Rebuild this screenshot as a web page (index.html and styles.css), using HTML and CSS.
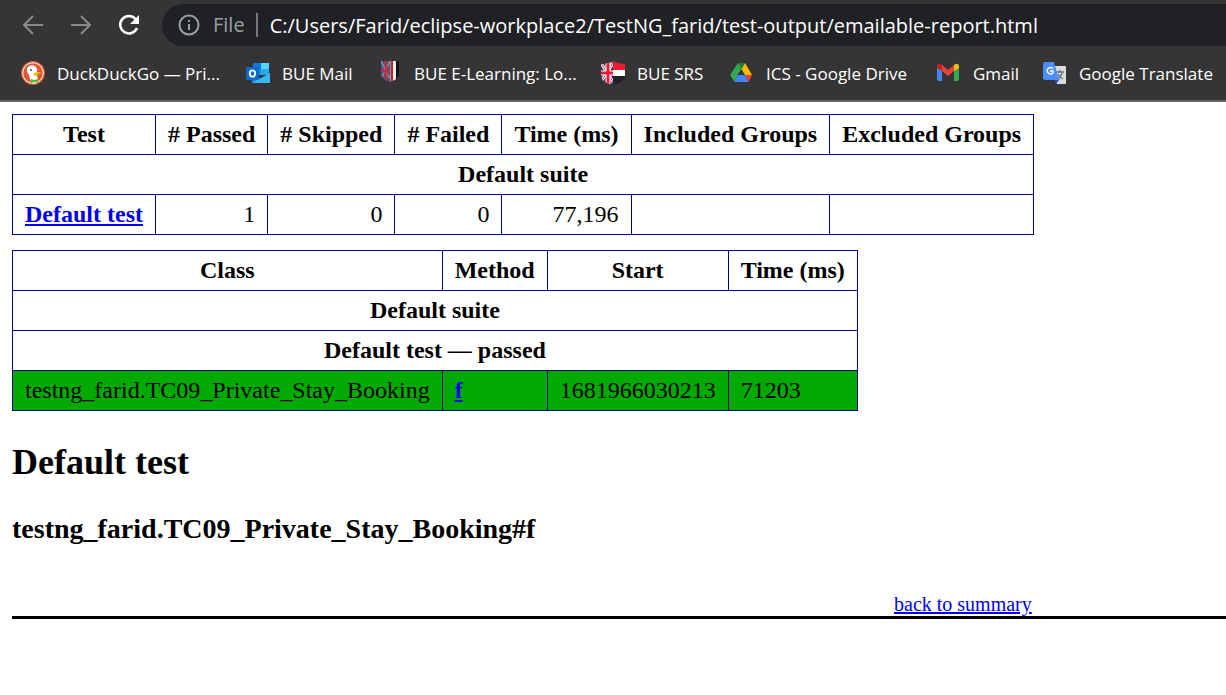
FILE: index.html
```html
<!DOCTYPE html>
<html lang="en">
<head>
<meta charset="utf-8">
<title>TestNG Report</title>
<link rel="stylesheet" href="styles.css">
</head>
<body>
<header class="browser">
  <div class="toolbar">
    <button class="nav" aria-label="Back"><svg viewBox="0 0 24 24"><path d="M22 12H3M12 3l-9 9 9 9"/></svg></button>
    <button class="nav" aria-label="Forward"><svg viewBox="0 0 24 24"><path d="M2 12h19M12 3l9 9-9 9"/></svg></button>
    <button class="nav reload" aria-label="Reload"><svg viewBox="0 0 24 24"><path d="M20 15A8.700 8.700 0 1 1 18.500 6"/><path class="head" d="M22 2v9h-9z"/></svg></button>
    <div class="omnibox">
      <svg class="info" viewBox="0 0 24 24"><circle cx="12" cy="12" r="9.500"/><path d="M12 11v6M12 7v2"/></svg>
      <label class="scheme" for="url">File</label>
      <input class="url" id="url" type="text" value="C:/Users/Farid/eclipse-workplace2/TestNG_farid/test-output/emailable-report.html">
    </div>
  </div>
  <nav class="bookmarks">
    <a class="bookmark" href="#"><svg viewBox="0 0 24 24"><circle cx="12" cy="12" r="12" fill="#de5833"/><circle cx="12" cy="12" r="10.300" fill="none" stroke="#fff" stroke-width="1"/><path d="M7 6c2-3 9-2 9 3v5l1 7c-3 2-6 1-7 0L8 14C6 11 5 8 7 6z" fill="#fff"/><path d="M13 12c2-1 4-1 7-1-1 2-4 2-4 3h2l-3 1c-2 0-3-1-2-3z" fill="#fdb913"/><path d="M10 18l3 1 4-1v4l-3-1-4 1z" fill="#4cba3c"/><circle cx="10" cy="9" r="1" fill="#2d4f8e"/></svg><span>DuckDuckGo — Pri...</span></a>
    <a class="bookmark" href="#"><svg viewBox="0 0 24 24"><path d="M7 2h16v12H7z" fill="#1490df"/><path d="M15 2h8v6h-8z" fill="#50d9ff"/><path d="M7 2h8v6H7z" fill="#0f78d4"/><path d="M15 8h8v6h-8z" fill="#28a8ea"/><path d="M6 13l9 5 9-6v10H6z" fill="#1687d9"/><path d="M6 22l18-10v10z" fill="#35b8f1"/><rect y="6" width="13" height="13" rx="1" fill="#0a6cc8"/><ellipse cx="6.500" cy="12.500" rx="2.700" ry="3.200" fill="none" stroke="#fff" stroke-width="1.800"/></svg><span>BUE Mail</span></a>
    <a class="bookmark" href="#"><svg viewBox="0 0 24 24"><clipPath id="crest"><path d="M3 0h18v14q-2 5-9 7-7-2-9-7z"/></clipPath><g clip-path="url(#crest)"><path d="M3 0h9v22H3z" fill="#355b8b"/><path d="M3 0l9 18M12 0L3 18" stroke="#9b8793" stroke-width="1.500"/><path d="M3 10h9M8 0v22" stroke="#c42e3a" stroke-width="2.500"/><path d="M12 0h1v22h-1z" fill="#8f949a"/><path d="M13 0h2v22h-2z" fill="#c91d29"/><path d="M15 0h3v22h-3z" fill="#f0eeee"/><path d="M18 0h3v22h-3z" fill="#111"/></g></svg><span>BUE E-Learning: Lo...</span></a>
    <a class="bookmark" href="#"><svg viewBox="0 0 24 24"><clipPath id="shield"><path d="M0 3q7 0 12-3 5 3 12 3v13q-2 6-12 8Q2 22 0 16z"/></clipPath><g clip-path="url(#shield)"><path d="M0 0h12v24H0z" fill="#283b83"/><path d="M0 2l12 19M12 2L0 21" stroke="#fff" stroke-width="3"/><path d="M0 2l12 19M12 2L0 21" stroke="#e82536"/><path d="M0 12h12M7 0v24" stroke="#fff" stroke-width="5"/><path d="M0 12h12M7 0v24" stroke="#ed1c2e" stroke-width="3"/><path d="M12 0h12v9H12z" fill="#ed1c2e"/><path d="M12 9h12v6H12z" fill="#fff"/><path d="M12 15h12v9H12z" fill="#202124"/></g></svg><span>BUE SRS</span></a>
    <a class="bookmark" href="#"><svg viewBox="0 0 24 24"><path d="M8 2h7l-3.500 6z" fill="#188038"/><path d="M15 2l7 12h-7L11.500 8z" fill="#fbbc04"/><path d="M15 14h7l-3.500 7z" fill="#ea4335"/><path d="M0 14L8 2l3.500 6-4 6-3 7z" fill="#34a853"/><path d="M7.500 14h7.500l3.500 7h-14z" fill="#4285f4"/></svg><span>ICS - Google Drive</span></a>
    <a class="bookmark" href="#"><svg viewBox="0 0 24 24"><path d="M0 6l5 4v10H2q-2 0-2-2z" fill="#4285f4"/><path d="M17 10l5-4v12q0 2-2 2h-3z" fill="#34a853"/><path d="M5 4l6 5 6-5v6l-6 5-6-5z" fill="#ea4335"/><path d="M0 6V5q1-4 5-1v6L0 7z" fill="#c5221f"/><path d="M17 4q4-3 5 1v2l-5 3z" fill="#fbbc04"/></svg><span>Gmail</span></a>
    <a class="bookmark" href="#"><svg viewBox="0 0 24 24"><path d="M10 5h12q1 0 1 1v16q0 1-1 1h-8z" fill="#d9dcdf"/><path d="M13 11h8M17 9v2M19 12q-1 4-5 6M15 13q1 3 5 5" stroke="#63767e" stroke-width="1.300" fill="none"/><path d="M11 18h6l-4 5z" fill="#3a4fc4"/><path d="M2 1h9l5 18H2q-2 0-2-2V3q0-2 2-2z" fill="#4c8df6"/><path d="M10 7.500A3.300 3.300 0 1 0 10 12V10H7" stroke="#fff" stroke-width="1.400" fill="none"/></svg><span>Google Translate</span></a>
  </nav>
</header>
<main class="report">
  <table class="results" id="summary">
    <tr><th>Test</th><th># Passed</th><th># Skipped</th><th># Failed</th><th>Time (ms)</th><th>Included Groups</th><th>Excluded Groups</th></tr>
    <tr><th colspan="7">Default suite</th></tr>
    <tr><td><a class="strong" href="#t0">Default test</a></td><td class="num">1</td><td class="num">0</td><td class="num">0</td><td class="num">77,196</td><td></td><td></td></tr>
  </table>
  <table class="results">
    <tr><th>Class</th><th>Method</th><th>Start</th><th>Time (ms)</th></tr>
    <tr><th colspan="4">Default suite</th></tr>
    <tr><th colspan="4">Default test — passed</th></tr>
    <tr class="passed"><td>testng_farid.TC09_Private_Stay_Booking</td><td><a class="strong" href="#m0">f</a></td><td>1681966030213</td><td>71203</td></tr>
  </table>
  <h2 class="test-title" id="t0">Default test</h2>
  <h3 class="method-title" id="m0">testng_farid.TC09_Private_Stay_Booking#f</h3>
  <p class="totop"><a href="#summary">back to summary</a></p>
</main>
</body>
</html>
```

FILE: styles.css
```css
body {
  margin: 0;
  background: #fff;
  color: #000;
  font-family: "Liberation Serif", "Times New Roman", serif;
  font-size: 24px;
  overflow-x: hidden;
}

.browser {
  background: #353535;
  border-bottom: 2px solid #636363;
  font-family: "Open Sans", "Noto Sans", sans-serif;
}

.toolbar {
  display: flex;
  align-items: center;
  gap: 24px;
  padding: 4px 0 0 21px;
}

.nav {
  width: 24px;
  height: 24px;
  padding: 0;
  border: 0;
  background: none;
  color: #8a8a8a;
}

.nav svg {
  display: block;
  fill: none;
  stroke: currentColor;
  stroke-width: 2;
}

.reload {
  color: #fff;
}

.reload svg {
  stroke-width: 2.5;
}

.reload .head {
  fill: currentColor;
  stroke: none;
}

.omnibox {
  flex: 1;
  display: flex;
  align-items: center;
  height: 42px;
  margin-left: -3px;
  padding-left: 15px;
  border-radius: 21px 0 0 21px;
  background: #202124;
}

.info {
  width: 24px;
  fill: none;
  stroke: #9aa0a6;
  stroke-width: 2;
}

.scheme {
  margin-left: 12px;
  padding-right: 11px;
  border-right: 2px solid #77797c;
  color: #9aa0a6;
  font-size: 20px;
  line-height: 24px;
}

.url {
  flex: 1;
  min-width: 0;
  padding: 0 0 0 12px;
  border: 0;
  outline: 0;
  background: none;
  color: #fff;
  font-family: inherit;
  font-size: 20px;
}

.bookmarks {
  display: grid;
  grid-template-columns: 225px 132px 223px 129px 207px 106px auto;
  align-items: center;
  height: 54px;
  padding-left: 21px;
}

.bookmark {
  display: flex;
  align-items: center;
  gap: 12px;
  color: #fff;
  font-size: 17px;
  white-space: nowrap;
  text-decoration: none;
}

.bookmark svg {
  flex: none;
  width: 24px;
}

.report {
  padding: 12px 0 12px 12px;
}

.results {
  border-collapse: collapse;
  margin-bottom: 15px;
  line-height: 27px;
}

.results th,
.results td {
  padding: 6px 12px;
  border: 1px solid #008;
}

.num {
  text-align: right;
}

.passed {
  background: #0a0;
}

.strong {
  font-weight: bold;
}

.report a {
  color: #00e;
}

.test-title {
  margin: 30px 0;
  font-size: 36px;
  line-height: 42px;
}

.method-title {
  margin: 30px 0;
  font-size: 28px;
  line-height: 32px;
}

.totop {
  margin: 47px 0 0;
  padding-right: 16%;
  border-bottom: 3px solid #000;
  font-size: 20px;
  line-height: 24px;
  text-align: right;
}
```
